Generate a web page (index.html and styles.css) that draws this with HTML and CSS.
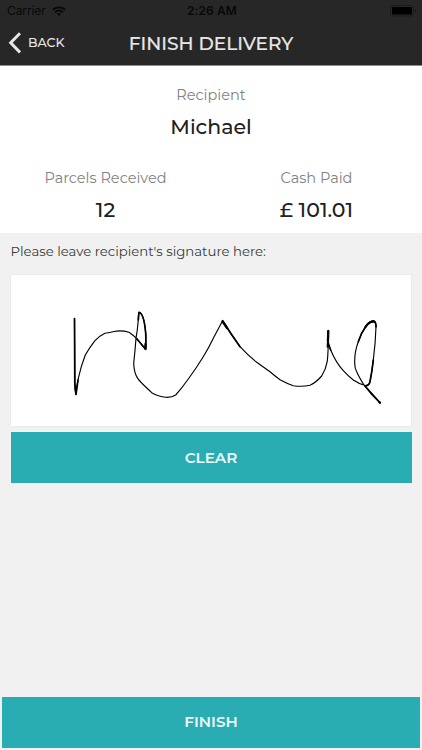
FILE: index.html
```html
<!DOCTYPE html>
<html lang="en">
<head>
<meta charset="utf-8">
<title>Finish Delivery</title>
<link rel="stylesheet" href="styles.css">
</head>
<body>
<div class="screen">
  <header class="header">
    <div class="status">
      <div class="carrier"><span>Carrier</span>
        <svg class="wifi" viewBox="0 0 14 10"><g fill="none" stroke="#080808" stroke-width="1.9"><path d="M.8 3.8Q7-1.5 13.2 3.8"/><path d="M3 6.2Q7 2.8 11 6.2"/></g><path d="M4.900 7.700Q7 6.100 9.100 7.700L7 9.900Z" fill="#080808"/></svg>
      </div>
      <span class="time">2:26 AM</span>
      <svg class="battery" viewBox="0 0 27 12"><rect x=".5" y=".5" width="23" height="10.5" rx="2.5" fill="none" stroke="#1b1b1b"/><rect x="2" y="2" width="20" height="7.5" rx="1.2" fill="#000"/><path d="M25 4Q27 5.800 25 7.500Z" fill="#141414"/></svg>
    </div>
    <nav class="nav">
      <div class="back"><svg class="chevron" viewBox="0 0 13 22"><path d="M12 1.200L2.700 10.800L12 20.400" fill="none" stroke="#e6e6e6" stroke-width="3"/></svg><span>BACK</span></div>
      <h1 class="title">FINISH DELIVERY</h1>
    </nav>
  </header>
  <section class="details">
    <div class="field recipient"><span class="label">Recipient</span><span class="value">Michael</span></div>
    <div class="pair">
      <div class="field"><span class="label">Parcels Received</span><span class="value">12</span></div>
      <div class="field"><span class="label">Cash Paid</span><span class="value">£ 101.01</span></div>
    </div>
  </section>
  <main class="main">
    <p class="prompt">Please leave recipient's signature here:</p>
    <div class="pad">
      <svg class="signature" viewBox="11 275 400 151" fill="none" stroke="#000" stroke-linecap="round" stroke-linejoin="round">
        <path stroke-width="1.15" d="M74.5 318.5L74.8 383Q75 390 76 394.5Q76.500 386 78.300 378.300Q81 366 85.300 355Q90 347 95 340.700Q100 335.500 105 333.300Q110 332.500 114 331.500Q121 330 129 332.300Q133 335 136.700 338.700L145.700 349.300Q146 340 145.700 333.300C145 325 143 313 139 312.300Q138.300 312.500 138.300 320Q137.500 330 136 338.300Q135 352 133.700 363.300Q134 373 137.700 378.300C141 383 147 388 151.700 392.700Q158 396.500 166 397.300Q172 397.500 175.700 395Q182 388 188.300 379Q196 368.500 203.300 356.700Q209 347.500 213.300 338.300L222.600 320.700Q231 334 240 346.700Q248 355.500 256.700 362.300L270 371.700Q275 376 280 379.700Q287 383.500 293.300 385.700Q302 387 310 385.300Q316 382.500 321.700 376Q326 369 327.200 361.700Q328.500 351 328.300 330.700L327.700 340Q328.500 345.500 330.700 350C334 358 339 366 343.300 370.700Q348 376 353.300 380Q359 384 366 385.700Q369 385.500 370 381.700Q372 372 373.300 360Q375.500 343 376 326.700Q376 322 374 321.300Q371 320.500 366.700 325Q361 333 358.300 341.700Q354.500 352 354.700 361.700Q354.500 368 356.700 371.700Q359 377 364 385Q371 395 380 402.700"/>
        <path stroke-width="1.7" d="M74.500 318.500L74.800 383Q75 390 76 394.500L78 380M136.700 338.700L145.700 349.300Q146 340 145.700 333.300C145 325 143 313 139 312.300L138.300 320M222.600 320.700Q231 334 240 346.700M327.500 347L328.300 330.700L327.700 340Q328.500 345.500 330.700 350M366 385.700Q369 385.500 370 381.700Q372 372 373.300 360M376 326.700Q376 322 374 321.300Q371 320.500 366.700 325Q361 333 358.300 341.700M365 386L380 402.700"/>
        <path stroke-width="2.300" d="M328.300 331.200L328 341M222.600 321.500L227 328M374.500 322Q374 321 371 322Q368 323 365.500 327M145.500 344L145.300 348.800M379.500 402.200L380 402.600"/>
      </svg>
    </div>
    <button class="button clear">CLEAR</button>
  </main>
  <footer class="footer"><button class="button finish">FINISH</button></footer>
</div>
</body>
</html>
```
FILE: styles.css
```css
* { box-sizing: border-box; }
body { margin: 0; font-family: Montserrat, Inter, sans-serif; }
.screen { width: 422px; height: 750px; display: flex; flex-direction: column; background: #f1f1f1; overflow: hidden; }
.header { height: 66px; background: #272727; border-bottom: 1px solid #8c8c8c; flex: none; }
.status { height: 22px; display: grid; grid-template-columns: 1fr auto 1fr; align-items: center; padding: 0 5px 0 7px; font: 12px/22px Inter, sans-serif; color: #080808; }
.carrier { display: flex; align-items: center; gap: 6px; letter-spacing: -.1px; }
.wifi { width: 14px; height: 10px; }
.time { font-weight: 600; letter-spacing: .12px; }
.battery { width: 27px; height: 12px; justify-self: end; }
.nav { height: 43px; display: grid; grid-template-columns: 1fr auto 1fr; align-items: center; color: #e6e6e6; }
.back { display: flex; align-items: center; gap: 7px; padding: 0 0 1px 8px; font-size: 12.6px; line-height: 20px; font-weight: 500; }
.chevron { width: 13px; height: 22px; }
.title { margin: 0; font-size: 18.5px; line-height: 24px; font-weight: 500; -webkit-text-stroke: .15px #e6e6e6; }
.details { height: 167px; background: #fff; padding-top: 18px; flex: none; }
.field { display: flex; flex-direction: column; align-items: center; white-space: nowrap; }
.label { font-size: 14.5px; line-height: 22px; color: #828282; }
.value { font-size: 20.5px; line-height: 30px; margin-top: 6px; font-weight: 500; color: #202020; }
.recipient { height: 83px; }
.pair { display: grid; grid-template-columns: 1fr 1fr; }
.main { flex: 1; padding: 0 10.5px; }
.prompt { margin: 0; height: 42px; padding-top: 8px; font-size: 13.25px; line-height: 21px; color: #3b3b3b; white-space: nowrap; }
.pad { height: 151px; margin: 0 .5px; background: #fff; box-shadow: 0 0 2px #dfdfe8; }
.signature { width: 100%; height: 151px; display: block; }
.button { display: block; width: 100%; height: 51px; border: 0; padding: 0; background: #29acb2; color: #effcfc; font: 600 15.2px/51px Montserrat, Inter, sans-serif; }
.clear { margin-top: 6px; }
.footer { padding: 0 2px 2px; }
.finish { line-height: 49px; padding-bottom: 2px; }
```
